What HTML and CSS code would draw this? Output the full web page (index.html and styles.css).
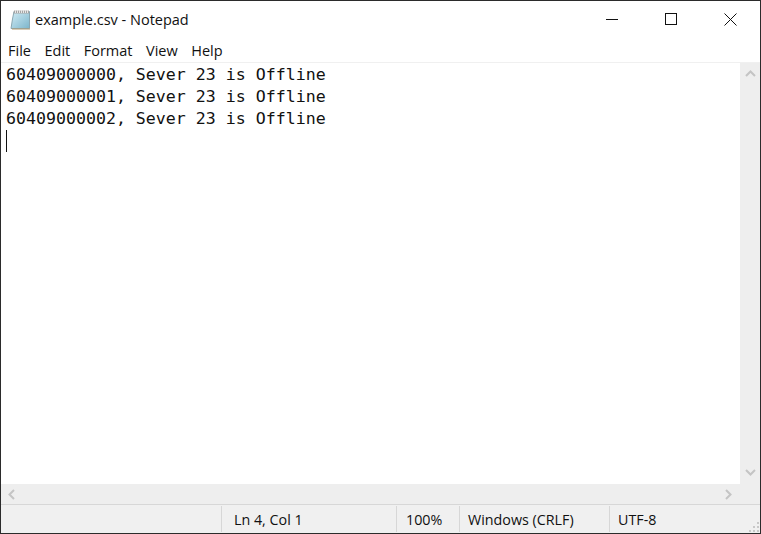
FILE: index.html
```html
<!DOCTYPE html>
<html lang="en">
<head>
<meta charset="utf-8">
<title>example.csv - Notepad</title>
<link rel="stylesheet" href="styles.css">
</head>
<body>
<div class="window">
  <header class="titlebar">
    <svg class="app-icon" width="21" height="21" viewBox="0 0 21 21">
      <defs><linearGradient id="pg" x1="0" y1="0" x2="1" y2="1"><stop offset="0" stop-color="#d2edf6"/><stop offset="1" stop-color="#7db5cb"/></linearGradient></defs>
      <path d="M4 2.500H19.500V19.500H1L2.500 10Z" fill="url(#pg)" stroke="#8aa7b2" stroke-width="1"/>
      <path d="M4 1.500H19V4.500H3.600Z" fill="#a5a5a5"/>
      <path d="M5.500 1V4M7.500 1V4M9.500 1V4M11.500 1V4M13.500 1V4M15.500 1V4M17.500 1V4" stroke="#e6e6e6" stroke-width="1"/>
      <path d="M2 20H20" stroke="#b49a70" stroke-width="1"/>
    </svg>
    <span class="title">example.csv - Notepad</span>
    <div class="controls">
      <div class="control"><svg width="13" height="13" viewBox="0 0 13 13"><path d="M0 6.500H12" stroke="#111" stroke-width="1"/></svg></div>
      <div class="control"><svg width="13" height="13" viewBox="0 0 13 13"><rect x="0.500" y="0.500" width="11" height="11" fill="none" stroke="#111" stroke-width="1"/></svg></div>
      <div class="control"><svg width="13" height="13" viewBox="0 0 13 13"><path d="M0.500 0.500L12.500 12.500M12.500 0.500L0.500 12.500" stroke="#111" stroke-width="1"/></svg></div>
    </div>
  </header>
  <nav class="menubar">
    <span>File</span><span>Edit</span><span>Format</span><span>View</span><span>Help</span>
  </nav>
  <div class="editor-row">
    <main class="editor">
      <div class="line">60409000000, Sever 23 is Offline</div>
      <div class="line">60409000001, Sever 23 is Offline</div>
      <div class="line">60409000002, Sever 23 is Offline</div>
      <div class="line"><span class="caret"></span></div>
    </main>
    <aside class="vscroll">
      <svg width="11" height="7" viewBox="0 0 11 7"><path d="M1 6L5.500 1.500L10 6" fill="none" stroke="#c4c4c4" stroke-width="2"/></svg>
      <svg width="11" height="7" viewBox="0 0 11 7"><path d="M1 1L5.500 5.500L10 1" fill="none" stroke="#c4c4c4" stroke-width="2"/></svg>
    </aside>
  </div>
  <div class="hscroll">
    <svg width="7" height="11" viewBox="0 0 7 11"><path d="M6 1L1.500 5.500L6 10" fill="none" stroke="#c4c4c4" stroke-width="2"/></svg>
    <svg width="7" height="11" viewBox="0 0 7 11"><path d="M1 1L5.500 5.500L1 10" fill="none" stroke="#c4c4c4" stroke-width="2"/></svg>
  </div>
  <footer class="statusbar">
    <div class="cell cell-spacer"></div>
    <div class="cell cell-pos">Ln 4, Col 1</div>
    <div class="cell cell-zoom">100%</div>
    <div class="cell cell-eol">Windows (CRLF)</div>
    <div class="cell cell-enc">UTF-8</div>
    <svg class="grip" width="12" height="12" viewBox="0 0 12 12"><path d="M9 1h2v2H9zM5 5h2v2H5zM9 5h2v2H9zM1 9h2v2H1zM5 9h2v2H5zM9 9h2v2H9z" fill="#c8c8c8"/></svg>
  </footer>
</div>
</body>
</html>
```
FILE: styles.css
```css
html, body {
  margin: 0;
  padding: 0;
  background: #fff;
}
.window {
  box-sizing: border-box;
  width: 761px;
  height: 534px;
  border: 1px solid #2b2b2b;
  display: flex;
  flex-direction: column;
  font-family: "Open Sans", "Noto Sans", sans-serif;
  font-size: 14.3px;
  color: #1a1a1a;
  overflow: hidden;
}
.titlebar {
  height: 37px;
  flex: none;
  display: flex;
  align-items: center;
  padding-left: 9px;
  box-sizing: border-box;
  padding-bottom: 1px;
}
.app-icon { flex: none; }
.title {
  margin-left: 4px;
  font-size: 14.5px;
  color: #111;
  white-space: nowrap;
}
.controls {
  margin-left: auto;
  display: flex;
  align-items: center;
}
.control {
  width: 59px;
  height: 36px;
  display: flex;
  align-items: center;
  justify-content: center;
}
.menubar {
  height: 24px;
  flex: none;
  display: flex;
  align-items: center;
  padding-left: 7px;
  gap: 13.500px;
  font-size: 14.5px;
  color: #111;
  border-bottom: 1px solid #f0f0f0;
}
.editor-row {
  flex: 1;
  min-height: 0;
  display: flex;
}
.editor {
  flex: 1;
  padding: 1px 0 0 5px;
  font-family: "DejaVu Sans Mono", "Liberation Mono", monospace;
  font-size: 16.6px;
  line-height: 22px;
  color: #111;
}
.line {
  height: 22px;
  white-space: pre;
}
.caret {
  display: inline-block;
  width: 1px;
  height: 22px;
  background: #111;
  vertical-align: top;
}
.vscroll {
  width: 20px;
  flex: none;
  background: #eeeeee;
  display: flex;
  flex-direction: column;
  justify-content: space-between;
  align-items: center;
  padding: 7px 0 8px;
  box-sizing: border-box;
}
.hscroll {
  height: 20px;
  flex: none;
  background: #eeeeee;
  display: flex;
  justify-content: space-between;
  align-items: center;
  padding: 0 28px 0 7px;
  box-sizing: border-box;
}
.statusbar {
  height: 29px;
  flex: none;
  position: relative;
  display: flex;
  background: #f0f0f0;
  border-top: 1px solid #d7d7d7;
  box-sizing: border-box;
  color: #111;
}
.cell {
  box-sizing: border-box;
  height: 26px;
  margin-top: 1px;
  display: flex;
  align-items: center;
  padding-left: 12px;
  border-left: 1px solid #d7d7d7;
  white-space: nowrap;
}
.cell-spacer { width: 220px; border-left: 0; padding: 0; }
.cell-pos { width: 175px; }
.cell-zoom { width: 63px; padding-left: 9px; }
.cell-eol { width: 150px; padding-left: 8px; }
.cell-enc { flex: 1; padding-left: 8px; }
.grip {
  position: absolute;
  right: 0;
  bottom: 0;
}
```
